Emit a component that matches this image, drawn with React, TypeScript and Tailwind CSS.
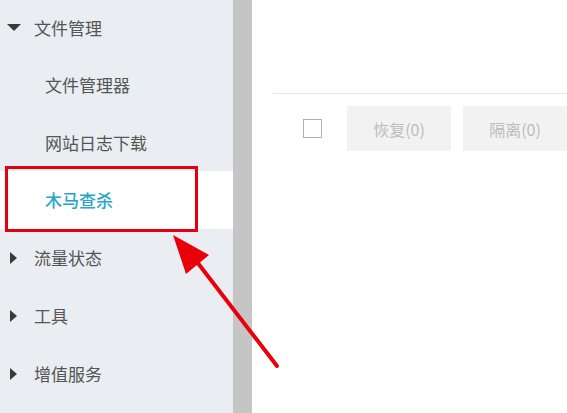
const font = "font-['Noto_Sans_CJK_SC','Noto_Sans',sans-serif]";

function Caret({ open }: { open?: boolean }) {
  return open ? (
    <svg width="14" height="8" viewBox="0 0 14 8" className="ml-[7px] mr-[13px]">
      <polygon points="0,0 14,0 7,7" fill="#3a3a3a" />
    </svg>
  ) : (
    <svg width="8" height="12" viewBox="0 0 8 12" className="ml-[10px] mr-[16px]">
      <polygon points="0,0 7,6 0,12" fill="#3a3a3a" />
    </svg>
  );
}

export default function App() {
  return (
    <div className={`relative flex h-[413px] w-[567px] overflow-hidden bg-white ${font}`}>
      <aside className="flex w-[233px] flex-col bg-[#eaedf1] text-[17px] text-[#555]">
        <div className="flex h-[56px] items-center">
          <Caret open />
          <span>文件管理</span>
        </div>
        <div className="flex h-[58px] items-center pl-[45px]">文件管理器</div>
        <div className="flex h-[57px] items-center pl-[45px]">网站日志下载</div>
        <div className="relative flex h-[58px] items-center bg-white pl-[45px] font-medium text-[#25a7c8]">
          木马查杀
          <div className="absolute left-[5px] top-[-5px] h-[66px] w-[193px] border-[3px] border-[#e5000f]" />
        </div>
        <div className="flex h-[58px] items-center">
          <Caret />
          <span>流量状态</span>
        </div>
        <div className="flex h-[58px] items-center">
          <Caret />
          <span>工具</span>
        </div>
        <div className="flex h-[58px] items-center">
          <Caret />
          <span>增值服务</span>
        </div>
      </aside>
      <div className="w-[19px] bg-[#c5c5c5]" />
      <main className="flex-1 pt-[93px]">
        <div className="ml-[21px] border-t border-[#e6e6e6]" />
        <div className="mt-[12px] flex items-center">
          <div className="ml-[51px] h-[19px] w-[19px] border border-[#b0b0b0] bg-white" />
          <button className="ml-[25px] h-[45px] w-[104px] shrink-0 bg-[#f2f2f2] text-[16px] text-[#bdbdbd]">
            恢复(0)
          </button>
          <button className="ml-[12px] h-[45px] w-[104px] shrink-0 bg-[#f2f2f2] text-[16px] text-[#bdbdbd]">
            隔离(0)
          </button>
        </div>
      </main>
      <svg className="pointer-events-none absolute left-0 top-0" width="567" height="413" viewBox="0 0 567 413">
        <line x1="277" y1="366" x2="194" y2="258" stroke="#e8000b" strokeWidth="4" strokeLinecap="round" />
        <polygon points="173,235 209,255 186,274" fill="#e8000b" />
      </svg>
    </div>
  );
}
